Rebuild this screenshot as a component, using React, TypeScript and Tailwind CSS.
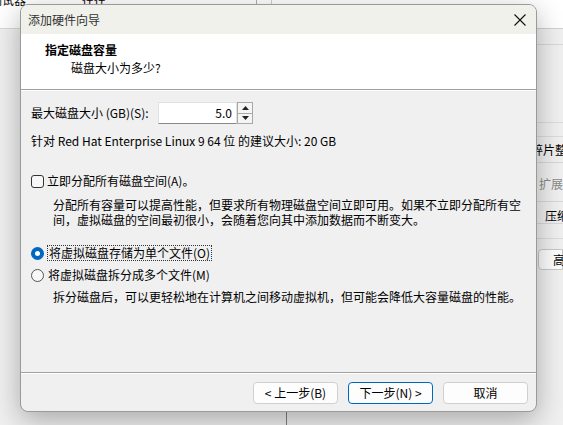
import React from "react";

const font = { fontFamily: '"Noto Sans CJK SC", "Microsoft YaHei", "Noto Sans", sans-serif' };

function Btn({ children, primary }: { children: React.ReactNode; primary?: boolean }) {
  return (
    <div
      className={
        "w-[85px] h-[22px] rounded-[4px] bg-[#fdfdfd] flex items-center justify-center text-[12px] text-black " +
        (primary ? "border border-[#0067c0]" : "border border-[#d0d0d0]")
      }
    >
      {children}
    </div>
  );
}

export default function App() {
  return (
    <div className="relative w-[563px] h-[425px] overflow-hidden bg-[#f0f0f0] text-black" style={font}>
      {/* background window */}
      <div className="flex w-full h-full">
        <div className="w-[530px] shrink-0 flex flex-col">
          <div className="h-[29px] bg-white border-b border-[#d9d9d9] relative flex overflow-hidden">
            <span className="text-[12px] leading-[12px] -mt-[6px] -ml-[10px] whitespace-nowrap">调试器</span>
            <span className="text-[12px] leading-[12px] -mt-[6px] ml-[56px] whitespace-nowrap">往往</span>
            <div className="ml-[150px] w-px bg-[#b0b0b0] h-full" />
            <div className="ml-[14px] w-px bg-[#d0d0d0] h-full" />
          </div>
          <div className="flex-1" />
          <div className="h-[14px] flex">
            <div className="ml-[286px] w-px bg-[#808080] h-full" />
          </div>
        </div>
        <div className="flex-1 min-w-0 flex flex-col text-[12px] leading-[16px] overflow-hidden">
          <div className="h-[29px] bg-white border-b border-[#d0d0d0]" />
          <div className="h-[16px] border-b border-[#d8d8d8]" />
          <div className="h-[78px] border-b border-[#dcdcdc]" />
          <div className="h-[14px] border-b border-[#dcdcdc]" />
          <div className="h-[26px] flex items-center pl-[1px] border-b border-[#d8d8d8] whitespace-nowrap">碎片整理</div>
          <div className="h-[9px]" />
          <div className="h-[30px] pt-[4px] pl-[9px] text-[#8a8a8a] border-b border-[#d8d8d8] whitespace-nowrap">扩展</div>
          <div className="h-[22px] pt-[6px] pl-[15px] border-b border-[#d8d8d8] whitespace-nowrap">压缩</div>
          <div className="h-[15px] border-b border-[#dcdcdc]" />
          <div className="mt-[10px] ml-[8px] h-[21px] flex items-center pl-[14px] border border-[#c8c8c8] rounded-l-[4px] bg-[#fdfdfd] whitespace-nowrap">高级</div>
        </div>
      </div>

      {/* dialog */}
      <div className="absolute left-[20px] top-[4px] w-[517px] h-[408px] rounded-[8px] bg-[#f0f0f0] border border-[#9a9a9a] shadow-[0_8px_28px_rgba(0,0,0,0.3)] overflow-hidden flex flex-col">
        <div className="h-[29px] bg-[#eff1ea] flex items-center justify-between pl-[7px] pr-[9px] shrink-0">
          <span className="text-[12px] text-[#333]">添加硬件向导</span>
          <svg width="12" height="12" viewBox="0 0 12 12" className="mr-[1px]">
            <path d="M0.5 0.5 L11.5 11.5 M11.5 0.5 L0.5 11.5" stroke="#111" strokeWidth="1.1" fill="none" />
          </svg>
        </div>
        <div className="h-[55px] bg-white flex flex-col pl-[24px] pt-[7px] shrink-0">
          <div className="text-[12px] leading-[18px] font-bold">指定磁盘容量</div>
          <div className="text-[12px] leading-[18px] pl-[26px]">磁盘大小为多少?</div>
        </div>
        <div className="h-px bg-[#a0a0a0] shrink-0" />
        <div className="h-px bg-white shrink-0" />
        <div className="flex-1 flex flex-col pl-[10px] text-[12px]">
          <div className="flex items-center mt-[11px] h-[22px]">
            <span className="w-[127px] whitespace-nowrap">最大磁盘大小 (GB)(S):</span>
            <div className="flex h-[22px]">
              <div className="w-[79px] h-[22px] bg-white border border-[#e0e0e0] border-b-[#8a8a8a] flex items-center justify-end pr-[4px]">5.0</div>
              <div className="w-[16px] h-[22px] border border-[#a8a8a8] flex flex-col bg-[#f5f5f5]">
                <div className="flex-1 flex items-center justify-center border-b border-[#a8a8a8]">
                  <svg width="7" height="4" viewBox="0 0 7 4"><path d="M0 4 L3.5 0 L7 4 Z" fill="#222" /></svg>
                </div>
                <div className="flex-1 flex items-center justify-center">
                  <svg width="7" height="4" viewBox="0 0 7 4"><path d="M0 0 L3.5 4 L7 0 Z" fill="#222" /></svg>
                </div>
              </div>
            </div>
          </div>
          <div className="mt-[9px] leading-[16px] whitespace-nowrap">针对 Red Hat Enterprise Linux 9 64 位 的建议大小: 20 GB</div>
          <div className="mt-[24px] flex items-center h-[16px]">
            <div className="w-[13px] h-[13px] rounded-[3px] border border-[#333] bg-[#f7f7f7]" />
            <span className="ml-[3px] whitespace-nowrap">立即分配所有磁盘空间(A)。</span>
          </div>
          <div className="mt-[8px] pl-[22px] leading-[15px] whitespace-nowrap">
            <div>分配所有容量可以提高性能，但要求所有物理磁盘空间立即可用。如果不立即分配所有空</div>
            <div>间，虚拟磁盘的空间最初很小，会随着您向其中添加数据而不断变大。</div>
          </div>
          <div className="mt-[18px] flex items-center h-[16px]">
            <div className="w-[13px] h-[13px] rounded-full bg-[#0067c0] flex items-center justify-center">
              <div className="w-[5px] h-[5px] rounded-full bg-white" />
            </div>
            <span className="ml-[3px] whitespace-nowrap border border-dotted border-[#333] leading-[14px] px-px">将虚拟磁盘存储为单个文件(O)</span>
          </div>
          <div className="mt-[6px] flex items-center h-[16px]">
            <div className="w-[13px] h-[13px] rounded-full border border-[#555] bg-[#f7f7f7]" />
            <span className="ml-[4px] whitespace-nowrap">将虚拟磁盘拆分成多个文件(M)</span>
          </div>
          <div className="mt-[6px] pl-[22px] leading-[16px] whitespace-nowrap">拆分磁盘后，可以更轻松地在计算机之间移动虚拟机，但可能会降低大容量磁盘的性能。</div>
        </div>
        <div className="h-px bg-[#a0a0a0] shrink-0" />
        <div className="h-px bg-white shrink-0" />
        <div className="h-[37px] flex items-start justify-end pt-[8px] pr-[8px] gap-[10px] shrink-0">
          <Btn>&lt; 上一步(B)</Btn>
          <Btn primary>下一步(N) &gt;</Btn>
          <Btn>取消</Btn>
        </div>
      </div>
    </div>
  );
}
